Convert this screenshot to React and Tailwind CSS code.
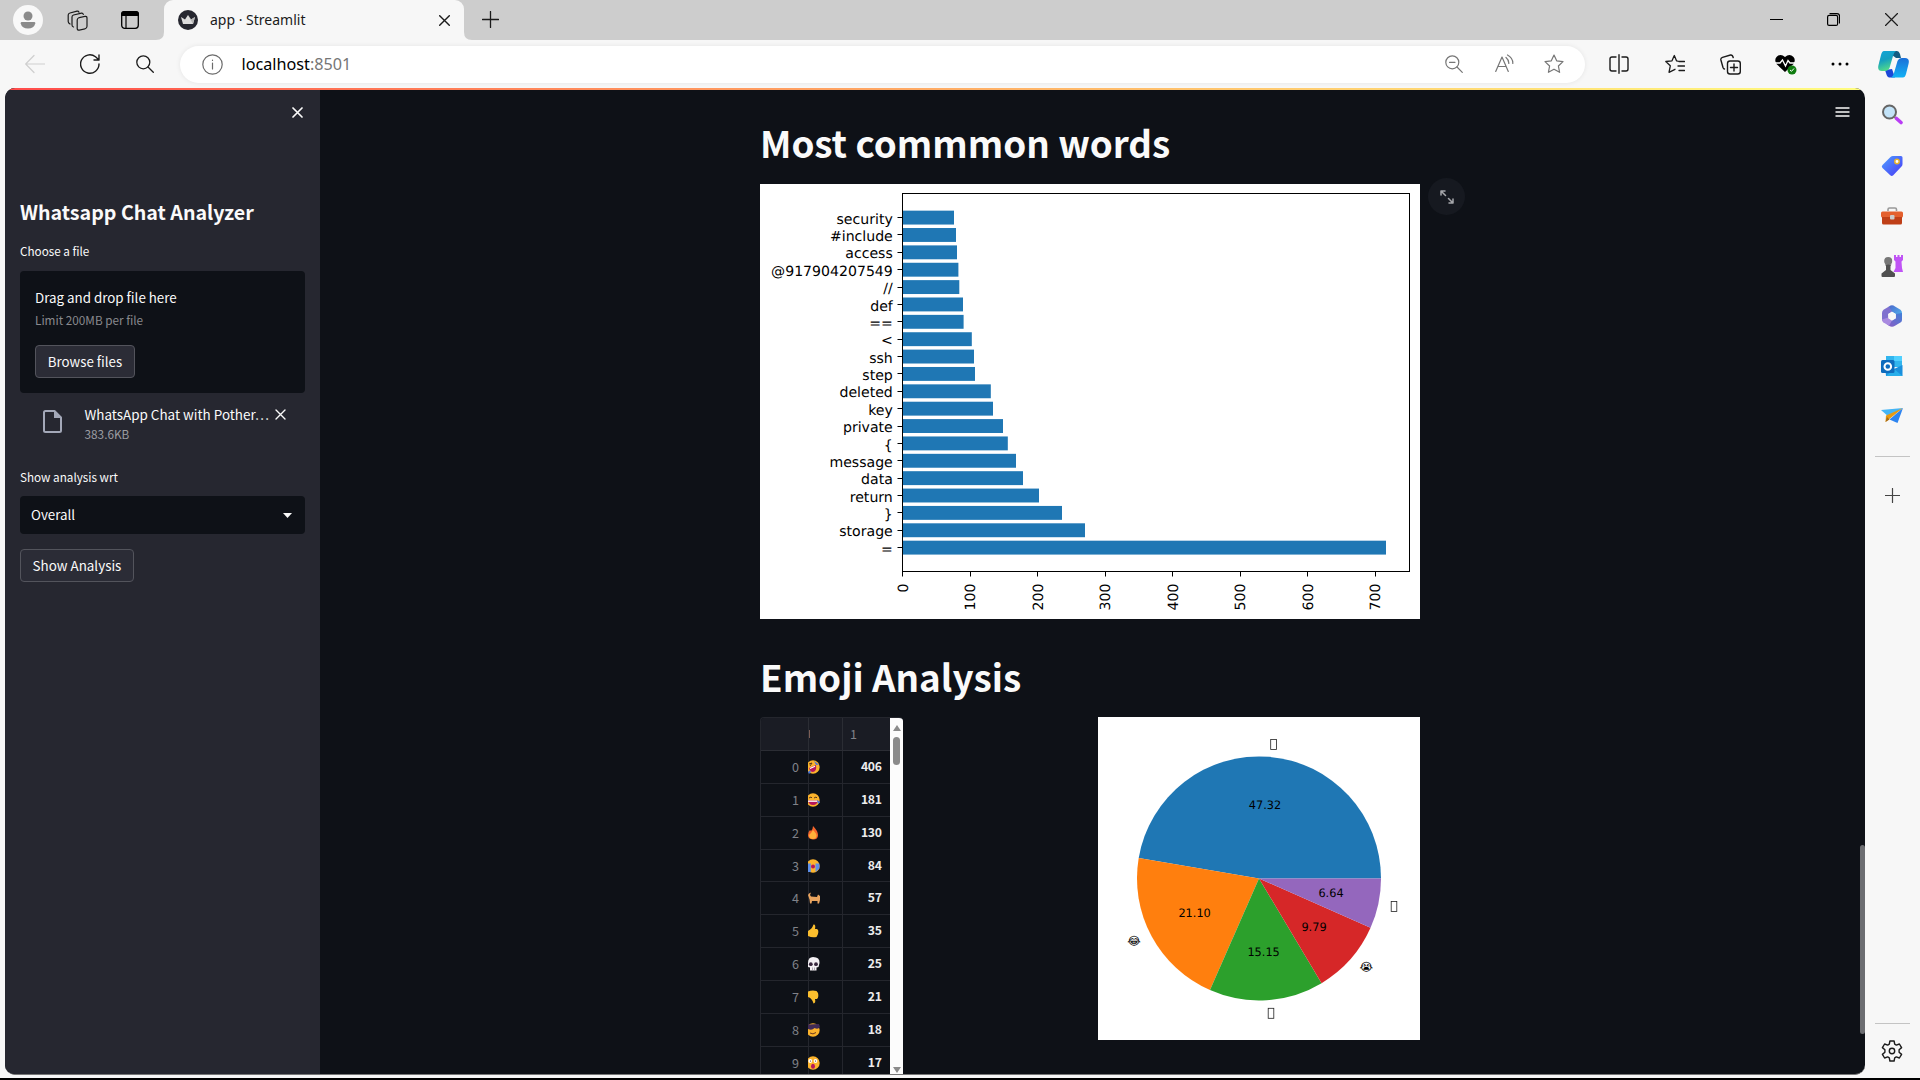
const words = [
  ["security", 954], ["#include", 956], ["access", 957], ["@917904207549", 958.4], ["//", 959.3],
  ["def", 963], ["==", 963.6], ["<", 971.8], ["ssh", 974], ["step", 975], ["deleted", 990.8],
  ["key", 993], ["private", 1003], ["{", 1007.8], ["message", 1016], ["data", 1023],
  ["return", 1039], ["}", 1062], ["storage", 1085], ["=", 1386],
];

function BarChart() {
  return (
    <svg className="block h-[435px] w-[660px] bg-white" viewBox="760 184 660 435" fontFamily="'DejaVu Sans', sans-serif" fontSize="14.1" textRendering="geometricPrecision">
      {words.map(([label, end], i) => {
        const y = 217.6 + i * 17.37;
        return (
          <g key={label}>
            <rect x="902.5" y={y - 6.95} width={end - 902.5} height="13.9" fill="#1f77b4" />
            <path d={`M897.5 ${Math.floor(y) + 0.5}H902.5`} stroke="#000" />
            <text x="892.8" y={y + 6.1} textAnchor="end">{label}</text>
          </g>
        );
      })}
      {[0, 100, 200, 300, 400, 500, 600, 700].map((n, i) => {
        const x = 902.5 + i * 67.57;
        return (
          <g key={n}>
            <path d={`M${Math.round(x - 0.5) + 0.5} 571.5V576.5`} stroke="#000" />
            <text transform={`translate(${x + 5} 583.6) rotate(-90)`} textAnchor="end">{n}</text>
          </g>
        );
      })}
      <rect x="902.5" y="193.5" width="507" height="378" fill="none" stroke="#000" />
    </svg>
  );
}

const slices = [
  [47.32, "#1f77b4", 1265, 804.5], [21.1, "#ff7f0e", 1194.6, 912.6], [15.15, "#2ca02c", 1263.6, 951.2],
  [9.79, "#d62728", 1314, 926.4], [6.64, "#9467bd", 1331, 892.6],
];

function PieChart() {
  let acc = 0;
  const pt = (f) => `${1259 + 122 * Math.cos(f * 2 * Math.PI)} ${878.4 - 122 * Math.sin(f * 2 * Math.PI)}`;
  return (
    <svg className="block h-[323px] w-[322px] bg-white" viewBox="1098 717 322 323" fontFamily="'DejaVu Sans', sans-serif" fontSize="11.6" textRendering="geometricPrecision">
      {slices.map(([v, c]) => {
        const a = acc;
        acc += v / 100;
        return <path key={c} d={`M1259 878.4L${pt(a)}A122 122 0 0 0 ${pt(acc)}Z`} fill={c} />;
      })}
      {slices.map(([v, c, x, y]) => (
        <text key={c} x={x} y={y + 4.3} textAnchor="middle" textLength={v < 10 ? 25.2 : 32.4} lengthAdjust="spacingAndGlyphs">{v.toFixed(2)}</text>
      ))}
      <g fill="none" stroke="#222" strokeWidth=".8">
        <rect x="1270.7" y="739.5" width="5.8" height="10" />
        <rect x="1268.2" y="1008.3" width="5.6" height="10" />
        <rect x="1391.2" y="901.6" width="5.6" height="10" />
      </g>
      <text x="1134" y="945.2" textAnchor="middle">{"\u{1F602}\uFE0E"}</text>
      <text x="1366.3" y="970.5" textAnchor="middle">{"\u{1F62D}\uFE0E"}</text>
    </svg>
  );
}

const emojiArt = [
  <g key="0"><circle cx="5" cy="7" r="6.7" fill="#fcb32c" /><path d="M1 8L8 5Q9 11 5 12Q2 12 1 8Z" fill="#b5165c" /><path d="M2 8.500L7 6.200" stroke="#fff" strokeWidth="1.200" /><path d="M0 12Q2 9 3 12L1 14ZM6 1L11 4.500L8 5Z" fill="#4a76d9" /><path d="M1 4L4 3L2 6" stroke="#5b3a1b" fill="none" /></g>,
  <g key="1"><circle cx="5" cy="7" r="6.700" fill="#fcb32c" /><path d="M0 7.500H10Q9 12 5 12Q1 12 0 7.500Z" fill="#b5165c" /><path d="M0 8.200H9.500" stroke="#fff" strokeWidth="1.300" /><path d="M1 5L3 4L4 5M6 5L8 4L9 5" stroke="#5b3a1b" fill="none" /><path d="M9 7L12.500 9L10 11Z" fill="#4a76d9" /></g>,
  <g key="2"><path d="M5 0Q10 5 10 9Q10 13.500 5 13.500Q0 13 0 9Q0 6 2 4L3 5Q5 3 5 0Z" fill="#f5652b" /><path d="M5 4Q9 8 8.500 10Q8 13 5 13Q1 13 1 9L3 7Z" fill="#fdb03a" /></g>,
  <g key="3"><circle cx="5" cy="7" r="6.700" fill="#fcb32c" /><rect x="0" y="4.500" width="2.800" height="8.500" fill="#5c8fea" /><path d="M7.500 4.500H11.400V9.500L7.500 13Z" fill="#5c8fea" /><circle cx="5" cy="7.500" r="2" fill="#b5165c" /></g>,
  <path key="4" d="M0 4L1 2.500L3 1.500L2 4L3 5.500L9 6L10 3.500L12 5V9L11 12.500H9.500V10H4L3.500 12.500H2L1.500 8.500Z" fill="#e9a45f" />,
  <path key="5" d="M5.500 .5Q8 0 7 5H9Q11 6 10 10L8.500 13Q4 14 0 12V7Q4 5 5.500 .5Z" fill="#fcbf2e" />,
  <g key="6"><path d="M0 6Q0 0 5 0Q12 0 11.500 6L10.500 10L8.500 10.500V13.500H2V10.500L0 10Z" fill="#f3f0f4" /><circle cx="2.800" cy="7.200" r="1.900" fill="#37263d" /><circle cx="8" cy="7.200" r="1.900" fill="#37263d" /><path d="M4.500 10.500V13M6.500 10.500V13" stroke="#83788a" strokeWidth=".6" /></g>,
  <path key="7" d="M5.500 13.500Q8 13 7 9H9Q11 7 10 3L8.500 1Q4 0 0 1.500V7Q4 8 5.500 13.500Z" fill="#fcbf2e" />,
  <g key="8"><circle cx="5" cy="7" r="6.700" fill="#fcb32c" /><path d="M0 1.500L11 1L12 4Q10 7 6.500 5Q4 8 0 6Z" fill="#402a56" /><path d="M2 10Q5 12 8 9.500" stroke="#6d3b21" fill="none" /></g>,
  <g key="9"><circle cx="5" cy="7" r="6.700" fill="#fcb32c" /><circle cx="2.300" cy="5" r="1.900" fill="#fff" /><circle cx="7.500" cy="5" r="1.900" fill="#fff" /><circle cx="2.500" cy="5" r=".6" fill="#40231c" /><circle cx="7.500" cy="5" r=".6" fill="#40231c" /><ellipse cx="5" cy="10.300" rx="2" ry="2.500" fill="#b5165c" /></g>,
];
const counts = [406, 181, 130, 84, 57, 35, 25, 21, 18, 17];

function EmojiTable() {
  return (
    <div className="flex h-[358px] w-[143px] overflow-hidden rounded-t-[4px] border-l border-t border-[#24262d] font-['Noto_Sans_CJK_SC',sans-serif] text-[12.6px]">
      <div className="w-[129px] shrink-0">
        <div className="flex h-[33px] border-b border-[#2b2d34] bg-[#1a1c24] leading-[31px] text-[#808289]">
          <div className="w-[48px] border-r border-[#2b2d34]" />
          <div className="flex w-[34px] items-center border-r border-[#2b2d34]"><span className="h-2 w-px bg-[#7b5d55]" /></div>
          <div className="pl-[7px]">1</div>
        </div>
        {counts.map((n, i) => (
          <div key={n} className="flex h-[32.87px] border-b border-[#24262d] leading-[31px]">
            <div className="w-[48px] border-r border-[#24262d] pr-[9px] text-right text-[#808289]">{i}</div>
            <div className="relative flex w-[34px] items-center border-r border-[#24262d]">
              <svg className="-ml-[1px] h-[14px] w-[12px]" viewBox="0 0 12 14">{emojiArt[i]}</svg>
            </div>
            <div className="w-[47px] pr-[8.5px] text-right text-[12.2px] font-bold tracking-[-0.35px] text-[#ececed]">{n}</div>
          </div>
        ))}
      </div>
      <div className="flex w-[13px] shrink-0 flex-col items-center justify-between bg-[#fcfcfc] pb-[2px] pt-[7px]">
        <div className="flex flex-col items-center gap-[6px]">
          <svg className="h-[6px] w-[8px]" viewBox="0 0 8 6"><path d="M4 0L8 6H0Z" fill="#8b8b8b" /></svg>
          <div className="h-[28px] w-[7px] rounded-full bg-[#8b8b8b]" />
        </div>
        <svg className="h-[6px] w-[8px]" viewBox="0 0 8 6"><path d="M0 0H8L4 6Z" fill="#8b8b8b" /></svg>
      </div>
    </div>
  );
}

function Icon({ className = "size-5", box = "0 0 20 20", children, stroke = "#1b1b1b", w = 1.2 }) {
  return (
    <svg className={`shrink-0 ${className}`} viewBox={box} fill="none" stroke={stroke} strokeWidth={w} strokeLinecap="round" strokeLinejoin="round">
      {children}
    </svg>
  );
}

const star = "M10 1L12.700 6.800L19 7.600L14.400 12L15.600 18.300L10 15.200L4.400 18.300L5.600 12L1 7.600L7.300 6.800Z";

function TabStrip() {
  return (
    <div className="flex h-10 items-center bg-[#cdcdcd]">
      <div className="ml-[13px] flex size-[30px] items-center justify-center rounded-full bg-[#f8f8f8]">
        <svg className="size-[20px]" viewBox="0 0 20 20" fill="#8b8b8b"><circle cx="10" cy="6" r="4.500" /><path d="M3.500 12H16.500Q17.500 12 17.300 13.500Q16 18.500 10 18.500Q4 18.500 2.700 13.500Q2.500 12 3.500 12Z" /></svg>
      </div>
      <Icon className="ml-[24px] size-[21px]" box="0 0 21 21">
        <rect x="10.200" y="7" width="9.800" height="12.500" rx="2" transform="skewY(-12) translate(0 3.200)" />
        <path d="M6.500 17Q5 16.500 5 15V7Q5 5.500 6.500 5L14.500 3.200Q16 3 16.300 4.500M3 14Q1.200 13 1.200 11.500V5Q1.200 3.500 3 3L10 1.200Q11.500 1 12 2.200" />
      </Icon>
      <svg className="ml-[33px] size-[18px]" viewBox="0 0 18 18"><rect x=".7" y=".7" width="16.600" height="16.600" rx="3" fill="none" stroke="#000" strokeWidth="1.300" /><path d="M0 5V3Q0 0 3 0H15Q18 0 18 3V5Z" /><path d="M5 5V17" stroke="#000" strokeWidth="1.200" /></svg>
      <div className="relative ml-[25px] flex h-10 w-[300px] items-center rounded-t-[9px] bg-[#f7f7f7] pl-[14px]">
        <svg className="absolute -left-2 bottom-0 size-2" viewBox="0 0 8 8"><path d="M8 0V8H0Q8 8 8 0" fill="#f7f7f7" /></svg>
        <svg className="absolute -right-2 bottom-0 size-2" viewBox="0 0 8 8"><path d="M0 0V8H8Q0 8 0 0" fill="#f7f7f7" /></svg>
        <svg className="size-5" viewBox="0 0 20 20"><circle cx="10" cy="10" r="10" fill="#262730" /><path d="M3 7L7 9.500L10 5L13 9.500L17 7L15 14H5Z" fill="#ddd" /><path d="M10 5L13 9.500L17 7L15 14Z" fill="#b5b5b5" /></svg>
        <span className="ml-3 whitespace-nowrap font-['Noto_Sans',sans-serif] text-[14px] leading-5 text-[#1b1b1b]">app · Streamlit</span>
        <Icon className="absolute right-[14px] top-[15px] size-[11px]" box="0 0 11 11" w={1.4}><path d="M.7 .7L10.300 10.300M10.300 .7L.7 10.300" /></Icon>
      </div>
      <Icon className="mb-px ml-[18px] size-[17px]" box="0 0 17 17" w={1.3}><path d="M.5 8.500H16.500M8.500 .5V16.500" /></Icon>
      <div className="mb-px ml-auto mr-[22px] flex items-center">
        <Icon className="mr-[44px] size-[13px]" box="0 0 13 13" stroke="#000"><path d="M0 6.500H13" /></Icon>
        <Icon className="mr-[45px] size-[13px]" box="0 0 13 13" stroke="#000"><rect x=".6" y="2.400" width="10" height="10" rx="1.500" /><path d="M3 .6H10Q12.500 .6 12.500 3V10" /></Icon>
        <Icon className="size-[13px]" box="0 0 13 13"><path d="M.5 .5L12.500 12.500M12.500 .5L.5 12.500" /></Icon>
      </div>
    </div>
  );
}

function Toolbar() {
  return (
    <div className="flex h-12 items-center bg-[#f7f7f7]">
      <Icon className="ml-[25px] size-5" stroke="#cfcfcf"><path d="M19.500 10H.7M9 1.500L.7 10L9 18.500" /></Icon>
      <Icon className="ml-[35px] size-5" w={1.4}><path d="M19 10A9.200 9.200 0 1 1 15.500 2.800L19 6M19 1V6H14" /></Icon>
      <Icon className="ml-[36px] size-[18px]" box="0 0 18 18" w={1.3}><circle cx="7.300" cy="7.300" r="6.500" /><path d="M12 12L17.300 17.300" /></Icon>
      <div className="ml-[26px] flex h-[37px] w-[1405px] items-center rounded-full bg-white shadow-[0_0_5px_rgba(0,0,0,0.08)]">
        <Icon className="ml-[22px] size-[21px]" box="0 0 21 21" stroke="#6b6b6b"><circle cx="10.500" cy="10.500" r="9.700" /><path d="M10.500 9V15M10.500 6.200V6.400" /></Icon>
        <span className="ml-[18.5px] whitespace-nowrap font-['Noto_Sans',sans-serif] text-[16.2px] leading-6 text-black">localhost<span className="text-[#767676]">:8501</span></span>
        <Icon className="ml-auto size-[18px]" box="0 0 18 18" stroke="#767676"><circle cx="7.300" cy="7.300" r="6.500" /><path d="M12 12L17.300 17.300M4.500 7.300H10" /></Icon>
        <Icon className="ml-[32px] size-[20px]" stroke="#767676"><path d="M.7 17.500L7 3L13.300 17.500M3 12.500H11M11 3.500Q14 6 13.800 9.500M12.500 1Q18 4 17.800 9.500" /></Icon>
        <Icon className="ml-[29px] mr-[21px] size-5" stroke="#767676"><path d={star} /></Icon>
      </div>
      <Icon className="ml-[24px] size-5" w={1.4}><path d="M10 .7V19.300M7 3H3Q1 3 1 5V15Q1 17 3 17H7M13 3H17Q19 3 19 5V15Q19 17 17 17H13" /></Icon>
      <Icon className="ml-[36px] size-5" w={1.3}><path d="M13 7.200L11.500 6.800L9.300 1.500L7 6.800L.8 7.500L5.300 11.800L4 18.300L10 15.300M14 7.500H19.500M13 12H19.500M14 16.500H19.500" /></Icon>
      <Icon className="ml-[35px] size-[21px]" box="0 0 21 21" w={1.4}><rect x="7.500" y="7" width="12.800" height="13" rx="2.500" /><path d="M14 10V17M10.500 13.500H17.500M4.500 15Q3.500 15 3 13.500L.9 6Q.5 4 2.500 3.300L10.500 1Q12.500 .7 13.200 3.500" /></Icon>
      <svg className="ml-[34px] h-[21px] w-[22px]" viewBox="0 0 22 21"><path d="M10 18L1.500 10Q-1 6 1.500 3Q5.500 -1 10 3Q14.500 -1 18.500 3Q21 6 18.500 10Z" /><path d="M0 9H5L7.500 6L10.500 12L13 6.500L15 9H20" fill="none" stroke="#fff" strokeWidth="1.300" /><circle cx="17" cy="16" r="4.500" fill="#107c10" /><path d="M15 16L16.500 17.300L19 14.500" fill="none" stroke="#fff" /></svg>
      <svg className="ml-[34px] h-1 w-[18px]" viewBox="0 0 18 4"><circle cx="2" cy="2" r="1.500" /><circle cx="9" cy="2" r="1.500" /><circle cx="16" cy="2" r="1.500" /></svg>
      <svg className="ml-[29px] h-[27px] w-[31px]" viewBox="0 0 31 27">
        <defs>
          <linearGradient id="cpA" x1="0" y1="0" x2=".3" y2="1"><stop stopColor="#12a5d8" /><stop offset=".5" stopColor="#159fc0" /><stop offset="1" stopColor="#50d98c" /></linearGradient>
          <linearGradient id="cpB" x1=".5" y1="0" x2=".5" y2="1"><stop stopColor="#1b6fd8" /><stop offset="1" stopColor="#12b2f5" /></linearGradient>
        </defs>
        <path d="M14 0H19Q21 0 22 3L23 7H18L14 4Z" fill="#145d82" />
        <path d="M17 26.500H11Q9 26 8 22L7 19L14 18Z" fill="#1b48d8" />
        <path d="M6 0H18Q16 1 15 5L11.500 17Q10 20 7 20H4Q-1 20 .5 14L3 4Q4 0 6 0Z" fill="url(#cpA)" />
        <path d="M25 26.500H13Q15 25.500 16 22L19.500 10Q21 7 24 7H27Q32 7 30.500 13L28 23Q27 26.500 25 26.500Z" fill="url(#cpB)" />
      </svg>
    </div>
  );
}

function SideRail() {
  return (
    <div className="flex w-[55px] shrink-0 flex-col items-center bg-[#f7f7f7] pt-[15px]">
      <div className="flex flex-col items-center gap-[28px] pr-[1px]">
        <svg className="mb-[1.5px] size-[22px]" viewBox="0 0 22 22"><circle cx="8.500" cy="9" r="6.500" fill="#c3e3f8" stroke="#666" strokeWidth="2" /><path d="M13 13.500L16 16" stroke="#777" strokeWidth="2" /><path d="M15.500 15.500L20 19.500" stroke="#b93df5" strokeWidth="3.600" strokeLinecap="round" /></svg>
        <svg className="size-[22px]" viewBox="0 0 22 22"><defs><linearGradient id="tg" x1="0" y1="0" x2="1" y2="1"><stop stopColor="#4fa0ff" /><stop offset="1" stopColor="#4838f5" /></linearGradient></defs><path d="M12 1H20Q21.500 1 21.500 2.500V9Q21.500 10.500 20.500 11.500L12 20.500Q10.500 21.500 9 20L1.500 13Q0 11.500 1.500 10L9.500 2Q10.500 1 12 1Z" fill="url(#tg)" /><circle cx="16" cy="6.500" r="2.200" fill="#fff" stroke="#e8b42c" strokeWidth="1.500" /></svg>
        <svg className="size-[22px]" viewBox="0 0 22 22"><path d="M7 6V4.500Q7 3 8.500 3H14Q15.500 3 15.500 4.500V6" fill="none" stroke="#999" strokeWidth="1.600" /><rect x="0" y="6.500" width="22" height="6" rx="1.500" fill="#e4602e" /><path d="M1 12H21V18Q21 19.500 19.500 19.500H2.500Q1 19.500 1 18Z" fill="#bf3f17" /><rect x="9" y="10" width="4.500" height="4.500" rx="1" fill="#ccc" /></svg>
        <svg className="size-[22px]" viewBox="0 0 22 22"><path d="M13 0H15V2H16.500V0H18.500V2H20V0H22V5L20.500 6.500L21 13L22 17H12.500L14.500 13V6.500L13 5Z" fill="#c054f5" /><circle cx="7.200" cy="6" r="4" fill="#777" /><path d="M4 9.500H10.500L9.500 11V15L14 18.500V21Q14 22 13 22H1.500Q.5 22 .5 21V18.500L5 15V11Z" fill="#505050" /></svg>
        <svg className="size-[22px]" viewBox="0 0 22 22">
          <defs><linearGradient id="mA" x1="0" y1="0" x2="1" y2="1"><stop stopColor="#4c63c9" /><stop offset="1" stopColor="#4fb8f0" /></linearGradient><linearGradient id="mB" x1="1" y1="0" x2="0" y2="1"><stop stopColor="#3f7fd8" /><stop offset="1" stopColor="#8f5cc4" /></linearGradient></defs>
          <path d="M8 1.500Q11 -.8 14 1.500L19.500 4.800Q21 6 21 8V12L14.800 9L11 6.700L6 4Z" fill="url(#mA)" />
          <path d="M21 8V15Q21 16.500 19.500 17.500L14 20.800Q11 22.800 8 20.800L5 18.500L11 15.500L14.800 13.300V9Z" fill="url(#mB)" />
          <path d="M8 1.500L2.500 4.800Q1 6 1 8V14Q1 16.500 3 17.500L8 15L7.200 9L11 6.700Z" fill="#8070cf" />
          <path d="M1.200 14.500L7.200 12.500L11 15.500L8 20.800L2.500 17.500Q1.200 16.500 1.200 14.500Z" fill="#a98ae0" />
          <path d="M11 6.700L14.800 9V13.300L11 15.500L7.200 13.300V9Z" fill="#f7f7f7" />
        </svg>
        <svg className="size-[22px]" viewBox="0 0 22 22"><path d="M5 1H21V12H5Z" fill="#32b5ee" /><path d="M13 1H21V6H13Z" fill="#50d0ff" /><path d="M4 10L13 14L21.500 10V21H5Z" fill="#1a8fdd" /><path d="M13 14L21.500 21H5Z" fill="#28aeea" /><rect x="0" y="5" width="13.500" height="13" rx="1.500" fill="#0f6cbd" /><circle cx="6.800" cy="11.500" r="3.300" fill="none" stroke="#fff" strokeWidth="2" /></svg>
        <svg className="size-[22px]" viewBox="0 0 22 22"><path d="M0 5L22 3L8 12Z" fill="#45b5f5" /><path d="M22 3L4.500 17L5 10.500Z" fill="#e79a12" /><path d="M22 3L16.500 18L8.500 14.500Z" fill="#2d84f0" /><path d="M4.500 17L8.500 14.500L6 12Z" fill="#a96b14" /></svg>
      </div>
      <div className="mt-[29.5px] h-px w-[35px] bg-[#c4c4c4]" />
      <Icon className="mt-[31px] size-[15px]" box="0 0 15 15" stroke="#444"><path d="M7.500 .5V14.500M.5 7.500H14.500" /></Icon>
      <div className="mt-auto h-px w-[35px] bg-[#c4c4c4]" />
      <Icon className="mb-[16px] mr-px mt-[16px] size-[22px]" box="0 0 22 22" w={1.4}>
        <path d="M8.900 1H13.100L13.700 4.200L15.300 5.100L18.400 4L20.600 7.600L18.100 9.800V12.200L20.600 14.400L18.400 18L15.300 16.900L13.700 17.800L13.100 21H8.900L8.300 17.800L6.700 16.900L3.600 18L1.400 14.400L3.900 12.200V9.800L1.400 7.600L3.600 4L6.700 5.100L8.300 4.200Z" /><circle cx="11" cy="11" r="2.700" />
      </Icon>
    </div>
  );
}

const cross = <path d="M1 1L10 10M10 1L1 10" />;

function Sidebar() {
  return (
    <aside className="w-[315px] shrink-0 bg-[#262730] px-[15px] text-[#fafafa]">
      <div className="flex h-[48px] items-center justify-end pr-[2.5px]"><Icon className="size-[11px]" box="0 0 11 11" stroke="#fafafa" w={1.7}>{cross}</Icon></div>
      <h1 className="mt-[61px] h-[30px] whitespace-nowrap text-[19.65px] font-bold leading-[30px]">Whatsapp Chat Analyzer</h1>
      <div className="mt-[14px] h-5 text-[11.7px] leading-5">Choose a file</div>
      <section className="mt-[10px] h-[122px] rounded-[4px] bg-[#0e1117] px-[15px] pt-[16px]">
        <div className="h-[22px] text-[13.35px] leading-[22px]">Drag and drop file here</div>
        <div className="h-[22px] text-[11.75px] leading-[22px] text-[#898a8e]">Limit 200MB per file</div>
        <button className="mt-[14px] flex h-[33px] w-[100px] items-center justify-center rounded-[4px] border border-[#53545c] bg-[#2b2c36] text-[13.3px]">Browse files</button>
      </section>
      <div className="mt-[10px] flex h-[44px] pl-[23px]">
        <svg className="mt-[7px] h-[23px] w-[19px]" viewBox="0 0 19 23"><path d="M2.500 1H11.500L18 7.500V20.500Q18 22 16.500 22H2.500Q1 22 1 20.500V2.500Q1 1 2.500 1Z" fill="none" stroke="#a3a8b8" strokeWidth="2" strokeLinejoin="round" /><path d="M11 1V8H18Z" fill="#a3a8b8" /></svg>
        <div className="ml-[22.500px] flex w-[187px] flex-col">
          <div className="h-[21px] whitespace-nowrap text-[13.45px] leading-[22px]">WhatsApp Chat with Pother…</div>
          <div className="h-[20px] text-[11.8px] leading-[20px] text-[#9b9ca1]">383.6KB</div>
        </div>
        <Icon className="ml-[3px] mt-[6px] size-[11px]" box="0 0 11 11" stroke="#fafafa" w={1.4}>{cross}</Icon>
      </div>
      <div className="mt-[20px] h-5 text-[11.7px] leading-5">Show analysis wrt</div>
      <div className="mt-[9px] flex h-[38px] items-center justify-between rounded-[4px] bg-[#0e1117] pl-[11px] pr-[13px] text-[13.35px]"><span>Overall</span><svg className="h-[5px] w-[9px]" viewBox="0 0 9 5"><path d="M0 0H9L4.500 5Z" fill="#fafafa" /></svg></div>
      <button className="mt-[15px] flex h-[33px] w-[114px] items-center justify-center rounded-[4px] border border-[#53545c] bg-[#2b2c36] text-[13.4px]">Show Analysis</button>
    </aside>
  );
}

export default function App() {
  return (
    <div className="flex h-[1080px] w-[1920px] flex-col overflow-hidden bg-[#f7f7f7]">
      <TabStrip />
      <Toolbar />
      <div className="flex h-[990px] pl-[5px]">
        <div className="relative flex h-[987px] w-[1860px] overflow-hidden rounded-[10px] border-b border-[#777] bg-[#0e1117] font-['Noto_Sans_CJK_SC',sans-serif]">
          <div className="absolute inset-x-0 top-0 h-[2px] bg-linear-to-r from-[#ff4b4b] to-[#fffd80]" />
          <Sidebar />
          <main className="relative flex-1 pl-[440px] text-[#fafafa]">
            <h1 className="mt-[27px] h-[54px] whitespace-nowrap text-[36.8px] font-bold leading-[54px]">Most commmon words</h1>
            <div className="mt-[15px] flex gap-[8px]">
              <BarChart />
              <div className="-mt-[6px] flex size-[37px] items-center justify-center rounded-full bg-[#161920]">
                <Icon className="size-[14px]" box="0 0 14 14" stroke="#a5a6aa" w={1.5}><path d="M1 5V1H5M1 1L5.500 5.500M13 9V13H9M13 13L8.500 8.500" /></Icon>
              </div>
            </div>
            <h1 className="mt-[30px] h-[54px] whitespace-nowrap text-[36.8px] font-bold leading-[54px]">Emoji Analysis</h1>
            <div className="mt-[14px] flex w-[660px] items-start justify-between"><EmojiTable /><PieChart /></div>
            <Icon className="absolute right-[15px] top-[18.5px] h-[10px] w-[15px]" box="0 0 15 10" stroke="#fafafa" w={1.4}><path d="M1 1H14M1 5H14M1 9H14" /></Icon>
            <div className="absolute right-0 top-[757px] h-[189px] w-[5px] rounded-full bg-[#6c6d71]" />
          </main>
        </div>
        <SideRail />
      </div>
      <div className="h-[2px] bg-black" />
    </div>
  );
}
